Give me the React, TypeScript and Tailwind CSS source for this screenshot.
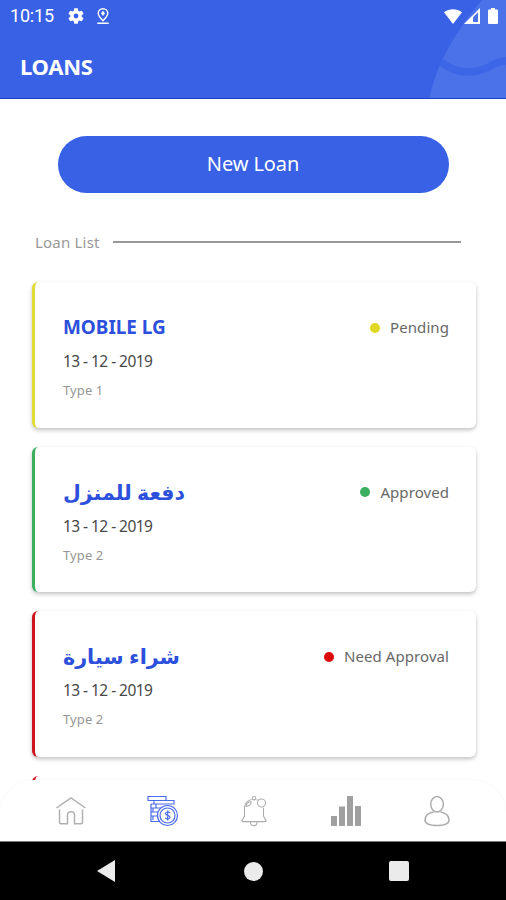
import clsx from "clsx";

interface Loan {
  id: number;
  title: string;
  date: string;
  type: string;
  status: string;
  titleClass: string;
  borderClass: string;
  dotClass: string;
}

const loans: Loan[] = [
  {
    id: 1,
    title: "MOBILE LG",
    date: "13 - 12 - 2019",
    type: "Type 1",
    status: "Pending",
    titleClass: "text-[19px] tracking-[-0.05px]",
    borderClass: "border-[#e0dc35]",
    dotClass: "bg-[#e0d820]",
  },
  {
    id: 2,
    title: "دفعة للمنزل",
    date: "13 - 12 - 2019",
    type: "Type 2",
    status: "Approved",
    titleClass: "text-[20.5px]",
    borderClass: "border-[#3bae60]",
    dotClass: "bg-[#3bae60]",
  },
  {
    id: 3,
    title: "شراء سيارة",
    date: "13 - 12 - 2019",
    type: "Type 2",
    status: "Need Approval",
    titleClass: "text-[20.7px]",
    borderClass: "border-[#cf1420]",
    dotClass: "bg-[#dc0808]",
  },
];

function StatusBar() {
  return (
    <div className="relative flex h-8 items-center pl-[10px] pr-2 text-white">
      <span className="w-[46px] font-['Roboto',sans-serif] text-[18px] leading-8 tracking-[-0.2px]">10:15</span>
      <svg className="ml-3 size-4" viewBox="2 2 20 20" fill="currentColor">
        <path d="M19.14 12.94c.04-.3.06-.61.06-.94s-.02-.64-.07-.94l2.03-1.58a.49.49 0 0 0 .12-.61l-1.92-3.32a.49.49 0 0 0-.59-.22l-2.39.96a7 7 0 0 0-1.62-.94l-.36-2.54a.48.48 0 0 0-.48-.41h-3.84a.47.47 0 0 0-.47.41l-.36 2.54c-.59.24-1.13.57-1.62.94l-2.39-.96a.48.48 0 0 0-.59.22L2.74 8.87a.48.48 0 0 0 .12.61l2.03 1.58a6 6 0 0 0-.02 1.88l-2.03 1.58a.49.49 0 0 0-.12.61l1.92 3.32c.12.22.37.29.59.22l2.39-.96c.5.38 1.03.7 1.62.94l.36 2.54c.05.24.24.41.48.41h3.84c.24 0 .44-.17.47-.41l.36-2.54a7 7 0 0 0 1.62-.94l2.39.96c.22.08.47 0 .59-.22l1.92-3.32a.48.48 0 0 0-.12-.61zM12 15a3 3 0 1 1 0-6 3 3 0 0 1 0 6z" />
      </svg>
      <svg className="ml-3 h-4 w-[14px]" viewBox="0 0 14 16" fill="none" stroke="currentColor" strokeWidth="1.4">
        <path d="M7 12.8C4.2 10 2.2 7.7 2.2 5.3a4.8 4.6 0 0 1 9.6 0c0 2.400-2 4.700-4.800 7.500zM1.300 15.200h11.400" />
        <path d="M7 2.800l2 2.500L7 8 5 5.300z" fill="currentColor" stroke="none" />
      </svg>
      <div className="ml-auto flex items-center">
        <svg className="h-[15px] w-[18px]" viewBox="0 0 18 15" fill="currentColor">
          <path d="M0 3.300C5.200-.7 12.800-.7 18 3.300L9 15z" />
        </svg>
        <svg className="ml-[2px] size-4" viewBox="0 0 16 16">
          <path d="M0 16L16 0v16z" fill="white" />
          <path d="M9 9.300l5-5v9.700H9z" fill="#4b72e9" />
        </svg>
        <svg className="ml-2 h-4 w-[10px]" viewBox="0 0 10 16" fill="currentColor">
          <path d="M3 0h4v1.600h2a1 1 0 0 1 1 1V15a1 1 0 0 1-1 1H1a1 1 0 0 1-1-1V2.600a1 1 0 0 1 1-1h2z" />
        </svg>
      </div>
    </div>
  );
}

function Header() {
  return (
    <header className="relative h-[99px] shrink-0 overflow-hidden border-b border-[#1f3fc4] bg-[#3861e6]">
      <svg className="absolute right-0 top-0 h-[98px] w-[80px]" viewBox="0 0 80 98">
        <path d="M3.500 98C9 70 22 45 43 16L56 0H80V98z" fill="#4b72e9" />
        <path d="M15 62C33 76 50 73 63 67C70 62 75 61 80 61" fill="none" stroke="#3d66e7" strokeWidth="7.500" />
      </svg>
      <StatusBar />
      <h1 className="relative pl-5 pt-[17px] text-[22px] font-bold leading-[34px] tracking-[-0.3px] text-white">LOANS</h1>
    </header>
  );
}

function LoanCard({ loan }: { loan: Loan }) {
  return (
    <li
      className={clsx(
        "flex h-[145.5px] items-start justify-between rounded-[6px] border-l-[3.5px] bg-white pl-[28px] pr-[27px] pt-[30px] shadow-[0_2px_4px_rgba(0,0,0,0.25)]",
        loan.borderClass,
      )}
    >
      <div>
        <h2 className={clsx("h-[31px] whitespace-nowrap font-bold leading-[31px] text-[#2c50dc]", loan.titleClass)}>{loan.title}</h2>
        <p className="mt-[6px] text-[15.5px] leading-6 tracking-[-0.55px] text-[#484848]">{loan.date}</p>
        <p className="mt-[7px] text-[13px] leading-5 tracking-[0.1px] text-[#969696]">{loan.type}</p>
      </div>
      <div className="flex h-[31px] items-center">
        <span className={clsx("size-[10px] rounded-full", loan.dotClass)} />
        <span className="ml-[10px] text-[15px] tracking-[0.07px] text-[#686868]">{loan.status}</span>
      </div>
    </li>
  );
}

function TabBar() {
  return (
    <nav className="absolute inset-x-0 bottom-0 h-[61px] rounded-t-[34px] bg-white shadow-[0_0_3px_rgba(0,0,0,0.05)]">
      <div className="flex h-full items-center justify-between pl-[55px] pr-[53px]">
        <svg className="size-8" viewBox="0 0 32 32" fill="none" stroke="#b0b0b0" strokeWidth="1.5">
          <path d="M1.5 13L16 3l14.500 10M4.500 14.500v12.800c0 .9.600 1.500 1.500 1.500h6.500V20c0-4.200 7-4.200 7 0v8.800H26c.9 0 1.500-.6 1.500-1.500V14.500" />
        </svg>
        <svg className="size-8" viewBox="0 0 32 32" fill="none" stroke="#4b6bea" strokeWidth="1.2">
          <path d="M1 1.500h18v4H1zM7 5.500h20v3.500H7zM4 9h18M4 9v4h12M4 13v4h8M4 17v4h7M4 21v5.500h9M6 13v4M6 21v4M9 9v4" />
          <circle cx="20.500" cy="20.500" r="10" fill="white" />
          <circle cx="20.500" cy="20.500" r="7.500" />
          <path d="M23 17.800c-1-1.300-4.500-1.200-4.500.9 0 2.200 4.500 1.200 4.500 3.500 0 2-3.500 2.200-4.800.8M20.700 15.500v10" />
        </svg>
        <svg className="size-8" viewBox="0 0 32 32" fill="none" stroke="#adadad" strokeWidth="1.1">
          <path d="M6.500 12.500v8.500L4 25.500c-.3.700 0 1.100.7 1.100h22.600c.7 0 1-.4.700-1.100L25.500 21v-8.200M6.500 12.500C7 8 10 5.500 13.500 4.500M18.500 4.700l2 .5M12.500 27c0 5 6.500 5 6.500 0" />
          <circle cx="16" cy="3.200" r="1.700" />
          <circle cx="23.500" cy="8" r="4" />
          <path d="M8 11.500c.2-2.500 2.500-4.500 5-4.800.8 2-2 4.600-5 4.800z" />
        </svg>
        <svg className="h-[30px] w-8" viewBox="0 0 32 30" fill="#a0a0a0">
          <path d="M1 20h6v10H1zM9 10.500h6V30H9zM17 0h6v30h-6zM25 10h6v20h-6z" />
        </svg>
        <svg className="size-8" viewBox="0 0 32 32" fill="none" stroke="#adadad" strokeWidth="1.5">
          <ellipse cx="16" cy="9.300" rx="6.300" ry="7.800" />
          <path d="M12.500 17C7.500 18 4 20 4 25c0 3.800 5 5.500 12 5.500S28 28.800 28 25c0-5-3.500-7-8.500-8" />
        </svg>
      </div>
    </nav>
  );
}

function SystemNav() {
  return (
    <div className="flex h-[59px] shrink-0 items-center justify-between border-t border-[#777] bg-black pl-[97px] pr-[97px]">
      <svg className="h-[22px] w-[18px]" viewBox="0 0 18 22" fill="#ebebeb">
        <path d="M0 11L18 0v22z" />
      </svg>
      <span className="ml-[2px] size-[19px] rounded-full bg-[#ebebeb]" />
      <span className="size-5 rounded-[2px] bg-[#ebebeb]" />
    </div>
  );
}

export default function App() {
  return (
    <div className="flex h-[900px] w-[506px] flex-col overflow-hidden bg-white font-['Noto_Sans','DejaVu_Sans',sans-serif]">
      <Header />
      <main className="relative min-h-0 flex-1 overflow-hidden">
        <button className="mx-auto mt-[37px] block h-[57px] w-[391px] rounded-full bg-[#3861e6] pb-[2px] text-[20px] tracking-[-0.1px] text-white">
          New Loan
        </button>
        <div className="mt-[37px] flex h-6 items-center pl-[35px] pr-[45px]">
          <span className="w-[78px] text-[15px] tracking-[0.2px] text-[#999]">Loan List</span>
          <span className="h-[2px] flex-1 bg-[#999]" />
        </div>
        <ul className="ml-8 mr-[30px] mt-[28px] flex flex-col gap-[19px]">
          {loans.map((loan) => (
            <LoanCard key={loan.id} loan={loan} />
          ))}
          <li className="h-[145px] rounded-[6px] border-l-[3.5px] border-[#cf1420] bg-white" />
        </ul>
        <TabBar />
      </main>
      <SystemNav />
    </div>
  );
}
